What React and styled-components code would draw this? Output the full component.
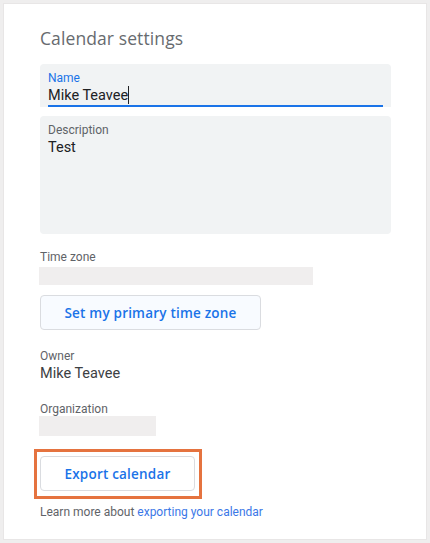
import React from "react";
import styled, { createGlobalStyle } from "styled-components";

const Global = createGlobalStyle`
  html, body { margin: 0; padding: 0; background: #efeeee; }
  body { font-family: Roboto, "Noto Sans", Arial, sans-serif; }
  #root { min-height: 543px; box-sizing: border-box; padding: 3px; }
`;

const Card = styled.div`
  background: #fff;
  height: 537px;
  box-sizing: border-box;
  border: 1px solid #e8e6e6;
  padding: 22px 35px 0 36px;
  display: flex;
  flex-direction: column;
`;

const Title = styled.h1`
  margin: 0;
  font-family: "Open Sans", Roboto, sans-serif;
  font-weight: 400;
  font-size: 17.5px;
  line-height: 24px;
  color: #676b6f;
  letter-spacing: 0.1px;
`;

const Field = styled.div`
  margin-top: ${(p) => p.$mt}px;
  height: ${(p) => p.$h}px;
  box-sizing: border-box;
  background: #f1f3f4;
  border-radius: 4px 4px ${(p) => (p.$focused ? "0 0" : "4px 4px")};
  padding: 6px 8px 0;
  display: flex;
  flex-direction: column;
`;

const FieldLabel = styled.div`
  font-size: 12px;
  line-height: 16px;
  color: ${(p) => (p.$focused ? "#1a73e8" : "#5f6368")};
`;

const FieldValue = styled.div`
  font-size: 14.5px;
  line-height: 19px;
  color: #202124;
  flex: 1;
`;

const Caret = styled.span`
  display: inline-block;
  width: 1px;
  height: 18px;
  background: #202124;
  vertical-align: -4px;
`;

const Underline = styled.div`
  height: 2px;
  background: #1a73e8;
`;

const Label = styled.div`
  margin-top: ${(p) => p.$mt}px;
  font-size: 12px;
  line-height: 16px;
  color: #5f6368;
`;

const Value = styled.div`
  font-size: 14.5px;
  line-height: 20px;
  color: #3c4043;
`;

const Placeholder = styled.div`
  margin-top: ${(p) => p.$mt}px;
  margin-left: -1px;
  width: ${(p) => p.$w}px;
  height: ${(p) => p.$h}px;
  background: #f0eeee;
`;

const Button = styled.button`
  box-sizing: border-box;
  height: 35px;
  width: ${(p) => p.$w}px;
  padding: 0;
  background: ${(p) => (p.$tint ? "#f8fbff" : "#fff")};
  border: 1px solid #dadce0;
  border-radius: 4px;
  color: #1a73e8;
  font-family: "Open Sans", Roboto, sans-serif;
  font-weight: 600;
  font-size: 13.5px;
  letter-spacing: 0.2px;
  cursor: pointer;
`;

const TzButton = styled(Button)`
  margin-top: 10px;
`;

const Highlight = styled.div`
  margin-top: 13px;
  margin-left: -6px;
  align-self: flex-start;
  border: 3px solid #e5733f;
  padding: 4px 4px 5px 3px;
  display: flex;
`;

const Help = styled.p`
  margin: 5px 0 0;
  font-size: 12px;
  line-height: 16px;
  color: #5f6368;
`;

const Link = styled.a`
  color: #3b78e7;
  text-decoration: none;
`;

export default function App() {
  return (
    <>
      <Global />
      <Card>
        <Title>Calendar settings</Title>
        <Field $mt={14} $h={43} $focused>
          <FieldLabel $focused>Name</FieldLabel>
          <FieldValue>
            Mike Teavee
            <Caret />
          </FieldValue>
          <Underline />
        </Field>
        <Field $mt={9} $h={118}>
          <FieldLabel>Description</FieldLabel>
          <FieldValue>Test</FieldValue>
        </Field>
        <Label $mt={15}>Time zone</Label>
        <Placeholder $mt={2} $w={274} $h={18} />
        <TzButton $w={221} $tint>
          Set my primary time zone
        </TzButton>
        <Label $mt={18}>Owner</Label>
        <Value>Mike Teavee</Value>
        <Label $mt={17}>Organization</Label>
        <Placeholder $mt={-1} $w={117} $h={20} />
        <Highlight>
          <Button $w={155}>Export calendar</Button>
        </Highlight>
        <Help>
          Learn more about <Link href="#">exporting your calendar</Link>
        </Help>
      </Card>
    </>
  );
}
